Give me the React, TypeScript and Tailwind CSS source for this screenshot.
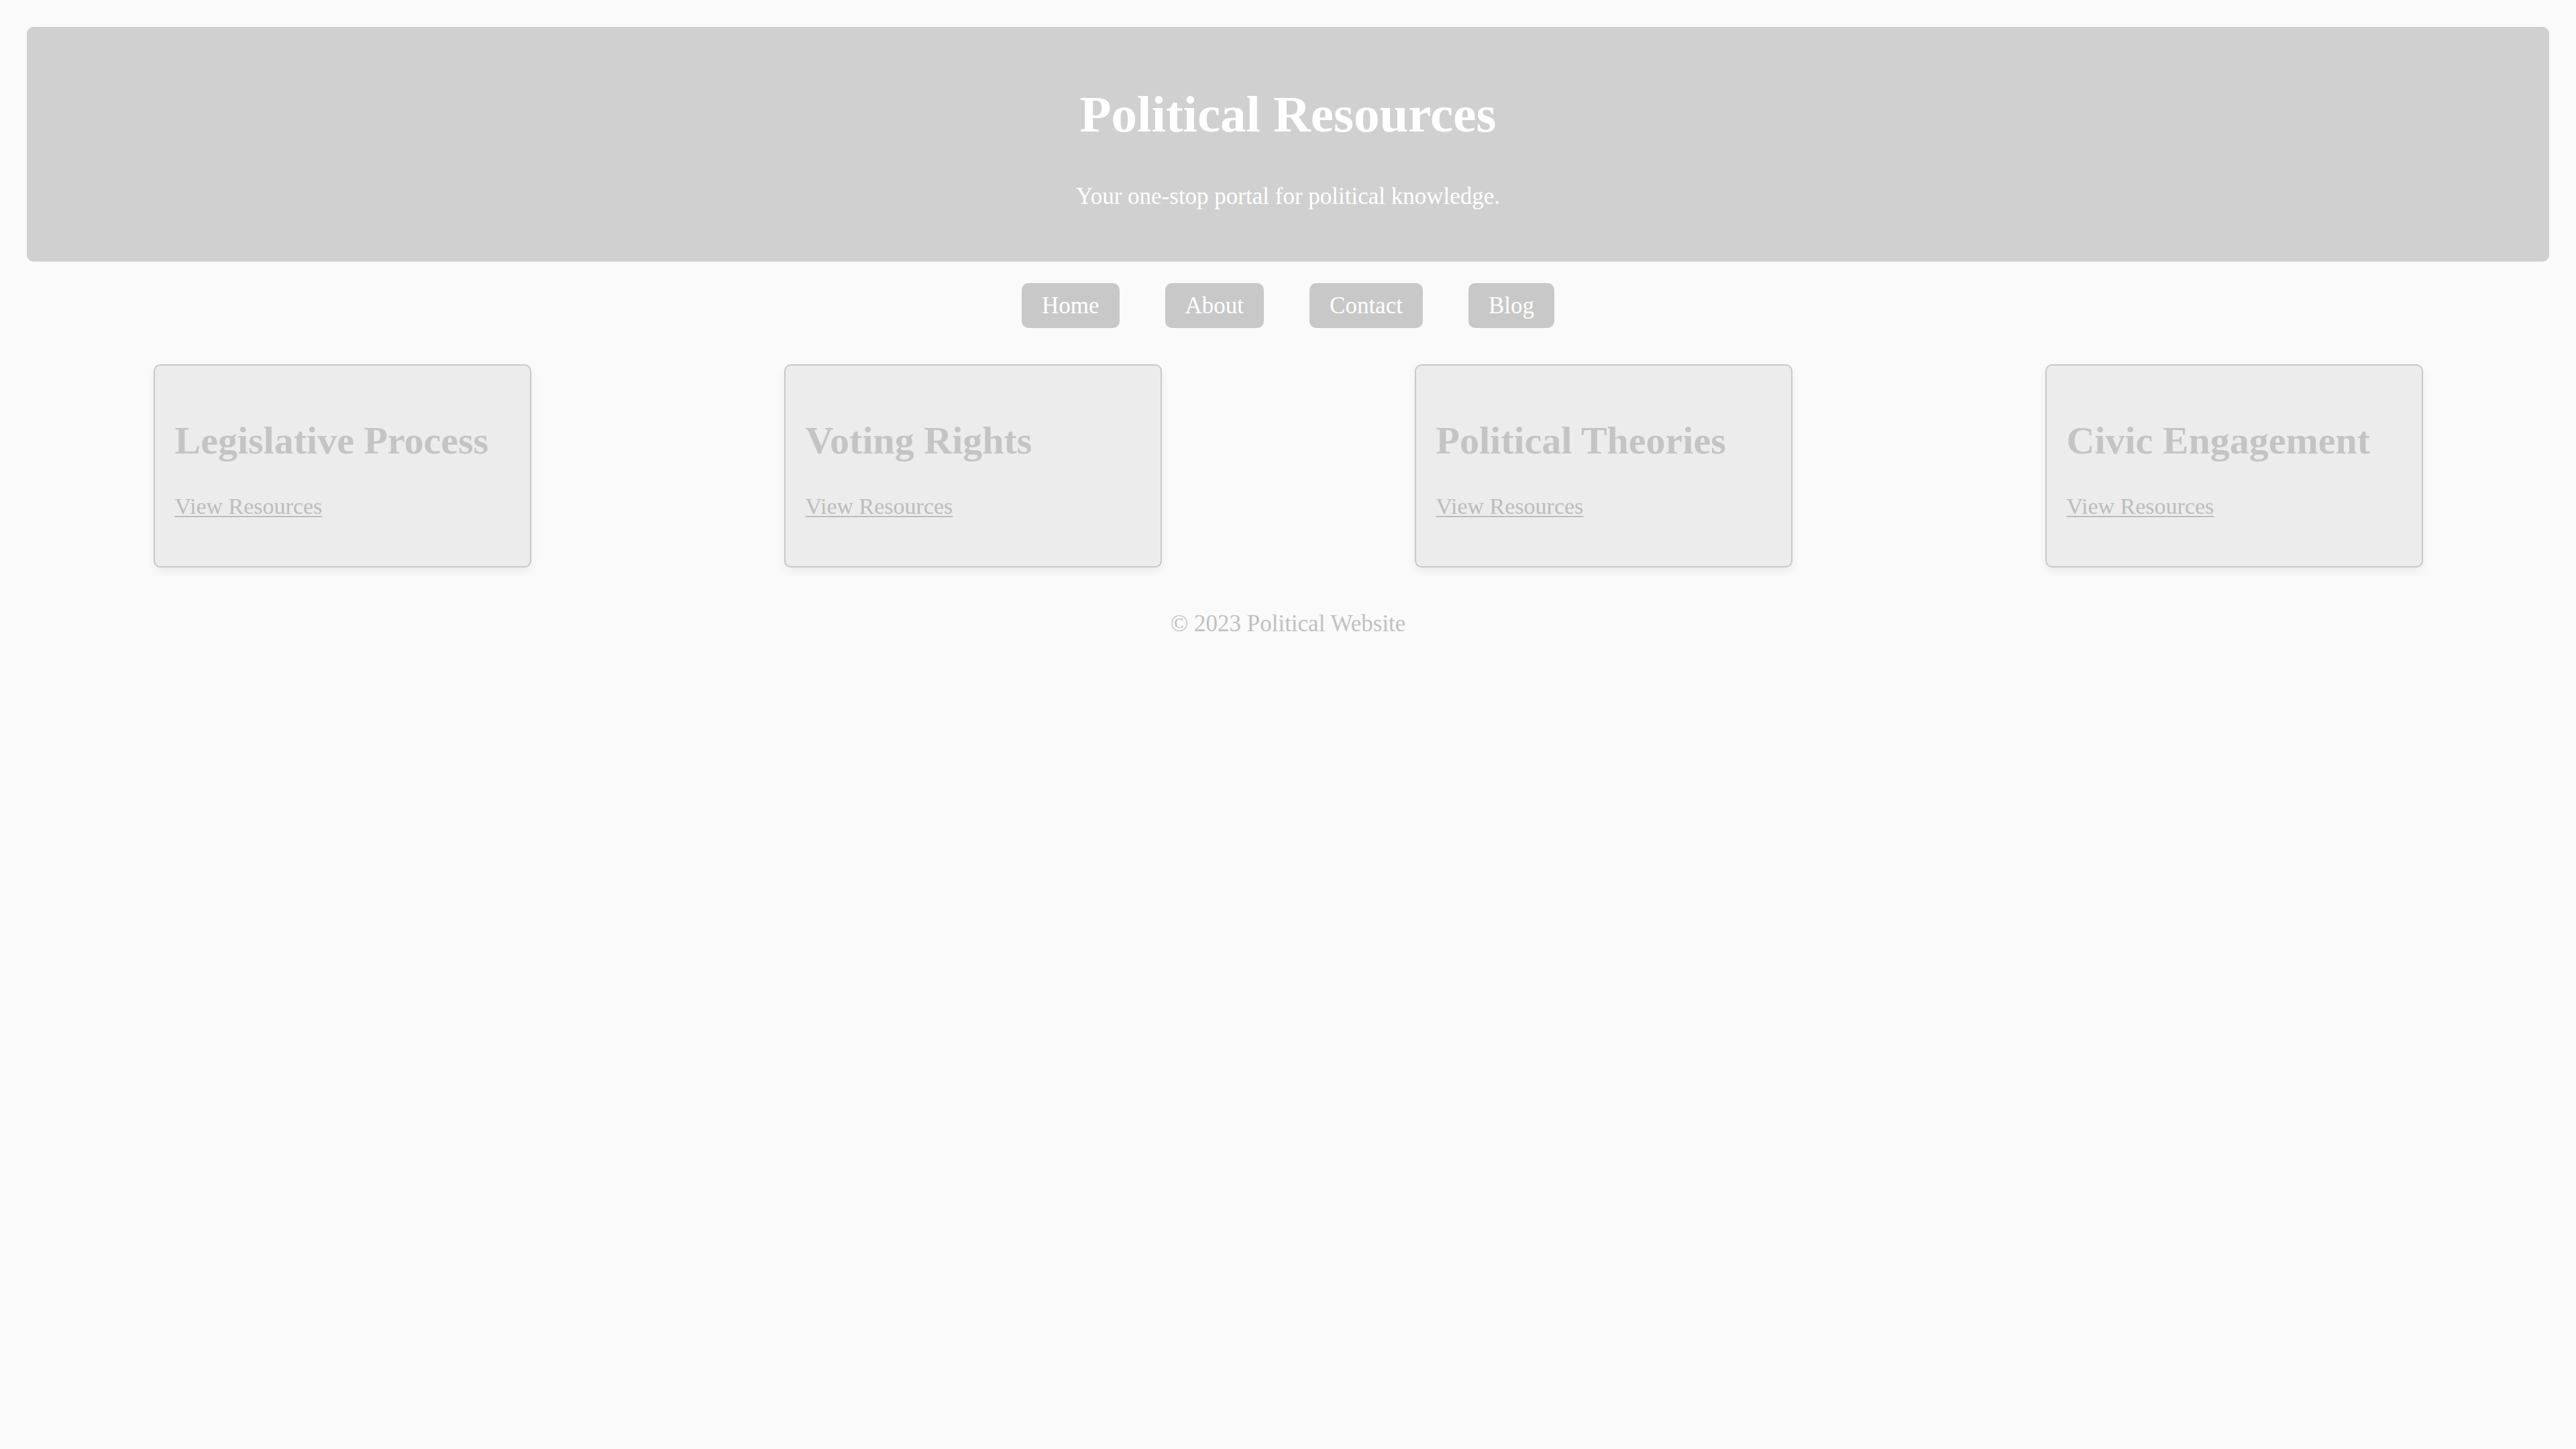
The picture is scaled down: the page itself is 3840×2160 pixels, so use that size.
const CARDS = ['Legislative Process', 'Voting Rights', 'Political Theories', 'Civic Engagement'];
const NAV = ['Home', 'About', 'Contact', 'Blog'];

export default function App() {
  return (
    <div className="min-h-screen bg-[#fafafa] px-[40px] pt-[40px] font-['Liberation_Serif',serif]">
      {/* Header */}
      <header className="rounded-[10px] bg-[#d0d0d0] pt-[92px] pb-[77px] text-center text-white">
        <h1 className="text-[77px] font-bold leading-[77px]">Political Resources</h1>
        <p className="mt-[64px] text-[35px] leading-[40px]">Your one-stop portal for political knowledge.</p>
      </header>

      {/* Nav */}
      <nav className="mt-[32px] flex justify-center gap-[68px]">
        {NAV.map((item) => (
          <a
            key={item}
            href="#"
            className="flex h-[67px] items-center rounded-[10px] bg-[#c8c8c8] px-[30px] text-[35px] leading-[40px] text-white"
          >
            {item}
          </a>
        ))}
      </nav>

      {/* Cards */}
      <section className="mt-[54px] flex justify-around">
        {CARDS.map((title) => (
          <div
            key={title}
            className="w-[563px] rounded-[10px] border-2 border-[#c8c8c8] bg-[#ececec] px-[30px] pt-[80px] pb-[69px] shadow-[0_6px_14px_rgba(0,0,0,0.06)]"
          >
            <h2 className="text-[58px] font-bold leading-[64px] text-[#c4c4c4]">{title}</h2>
            <a
              href="#"
              className="mt-[46px] block text-[34px] leading-[40px] text-[#bcbcbc] underline decoration-[#bcbcbc] decoration-2 underline-offset-[3px]"
            >
              View Resources
            </a>
          </div>
        ))}
      </section>

      <footer className="mt-[64px] text-center text-[35px] leading-[40px] text-[#c0c0c0]">
        © 2023 Political Website
      </footer>
    </div>
  );
}
